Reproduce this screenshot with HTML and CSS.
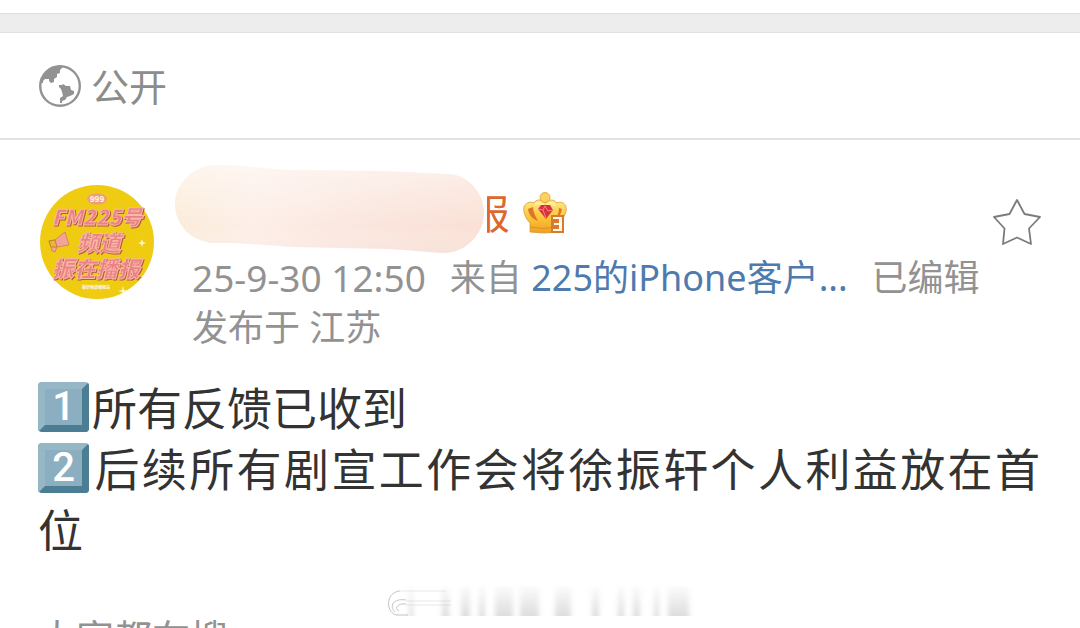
FILE: index.html
```html
<!DOCTYPE html>
<html lang="zh-CN">
<head>
<meta charset="utf-8">
<meta name="viewport" content="width=device-width, initial-scale=1">
<title>公开</title>
<link rel="stylesheet" href="styles.css">
</head>
<body>
<main class="page">
  <div class="divider"></div>
  <header class="visibility">
    <svg class="globe" viewBox="0 0 42 42" aria-hidden="true">
      <circle cx="21" cy="21" r="19.8" fill="none" stroke="#929292" stroke-width="2.4"/>
      <path fill="#929292" d="M2 15 8 6 17 1H23V3L21 5V8L18 9V12L15 14V17L12 18L10 16V14H6L4 16V18H1ZM20 20H23L24 19L27 21H31L32 25L35 26V29L31 31L28 32L26 35L23 36V38H21V33L24 31L23 27L22 24L20 22Z"/>
    </svg>
    <span>公开</span>
  </header>

  <article class="post">
    <div class="post-head">
      <svg class="avatar" viewBox="0 0 114 114" role="img" aria-label="头像">
        <circle cx="57" cy="57" r="57" fill="#efcb12"/>
        <ellipse cx="57" cy="14" rx="10" ry="5.5" fill="#ee9b86"/>
        <text class="tiny" x="57" y="17" font-size="8">999</text>
        <g class="face">
          <text x="57" y="40" font-size="21">FM225号</text>
          <text x="59" y="66" font-size="22">频道</text>
          <text x="56" y="92" font-size="22">振在播报</text>
        </g>
        <path d="M9 56 15 55 25 47 29 60 17 62 15 67 12 66 11 62Z" fill="#f3a49a" stroke="#d98558"/>
        <path d="M9 56 15 55 17 62 11 62Z" fill="#e9b932" stroke="#bd8330"/>
        <text class="tiny" x="56" y="104" font-size="4">振轩频道播报站</text>
        <path d="m102 54 1 3 3 1-3 1-1 3-1-3-3-1 3-1ZM83 101l1 4 4 1-4 1-1 4-1-4-4-1 4-1Z" fill="#fff7c8"/>
      </svg>

      <div class="author">
        <div class="name-row">
          <span class="name">报</span>
          <svg class="crown" viewBox="0 0 44 44" role="img" aria-label="会员">
            <defs>
              <linearGradient id="gold" x1="0" y1="0" x2="0" y2="1">
                <stop offset="0" stop-color="#ffe985"/><stop offset=".55" stop-color="#fbc438"/><stop offset="1" stop-color="#ee9f22"/>
              </linearGradient>
            </defs>
            <path d="M7 40V31C2 26 0 19 1 15c1-4 6-6 10-4 2-4 7-4 11 0 4-4 9-4 12 0 4-2 8 0 9 4 1 5-2 11-7 16v9Q21 42 7 40Z" fill="url(#gold)" stroke="#d9993a" stroke-width=".8"/>
            <path d="M5 17c1 7 5 10 10 12-3-5-5-10-5-14ZM39 17c-1 5-3 8-6 10 2-4 3-8 3-11Z" fill="#df7426"/>
            <path d="M12 13c2-3 7-2 9 1M24 13c3-3 7-2 8 1" fill="none" stroke="#fff0a4" stroke-width="2"/>
            <path d="M7 35Q20 38 34 35" fill="none" stroke="#d9902c"/>
            <circle cx="22" cy="5.5" r="5" fill="#fbd35a" stroke="#d99a38" stroke-width=".8"/>
            <path d="m15 17 3-4h9l3 5-7 9Z" fill="#d8323c"/>
            <path d="m15 17 5 1 2-4 3 5 5-1M20 18l3 8" fill="none" stroke="#f48580"/>
            <path d="M28 23H41V41H28Z" fill="#d9792f"/>
            <path d="M30 25H39V39H30V37H36V33H31V31H36V27H30Z" fill="#fff8e8"/>
          </svg>
          <svg class="smear" viewBox="0 0 310 88" aria-hidden="true">
            <defs>
              <linearGradient id="skin"><stop offset="0" stop-color="#fbecd9"/><stop offset=".25" stop-color="#fdeee7"/><stop offset=".65" stop-color="#fae5dc"/><stop offset="1" stop-color="#fae0d5"/></linearGradient>
              <linearGradient id="sheen" x1="0" y1="0" x2="0" y2="1"><stop offset="0" stop-color="#fff" stop-opacity=".5"/><stop offset=".7" stop-color="#fff" stop-opacity="0"/><stop offset="1" stop-color="#efe2df" stop-opacity=".3"/></linearGradient>
            </defs>
            <path d="M40 0C60-1 85 4 115 5L205 6 270 9C292 8 309 27 309 48 309 70 290 88 268 88L215 84 120 82 60 78 38 78C14 76 0 58 0 39 0 19 18 1 40 0Z" fill="url(#skin)"/>
            <path d="M40 0C60-1 85 4 115 5L205 6 270 9C292 8 309 27 309 48 309 70 290 88 268 88L215 84 120 82 60 78 38 78C14 76 0 58 0 39 0 19 18 1 40 0Z" fill="url(#sheen)"/>
          </svg>
        </div>
        <div class="meta">
          <time datetime="2025-09-30T12:50">25-9-30 12:50</time>
          <span>来自 <a href="#">225的iPhone客户...</a></span>
          <span>已编辑</span>
        </div>
        <div class="meta">发布于 江苏</div>
      </div>

      <button class="star" type="button" aria-label="收藏">
        <svg viewBox="0 0 50 50" aria-hidden="true">
          <path d="M25 3 32.5 17 48 20 37 31.5 39 47 25 40.5 11 47 12.5 31.5 2 20 17.5 17Z" fill="none" stroke="#7b7b7b" stroke-width="1.8" stroke-linejoin="round"/>
        </svg>
      </button>
    </div>

    <div class="content">
      <p><span class="keycap">1</span>所有反馈已收到</p>
      <p class="filled"><span class="keycap">2</span>后续所有剧宣工作会将徐振轩个人利益放在首</p>
      <p>位</p>
    </div>
  </article>

  <footer class="bottom">
    <h2 class="trending">大家都在搜</h2>
    <svg class="watermark" viewBox="0 0 310 40" aria-hidden="true">
      <defs>
        <linearGradient id="fade" x1="0" y1="0" x2="0" y2="1"><stop offset="0" stop-color="#aaa" stop-opacity="0"/><stop offset="1" stop-color="#aaa" stop-opacity=".4"/></linearGradient>
        <filter id="soft"><feGaussianBlur stdDeviation="2.5 0.3"/></filter>
      </defs>
      <path d="M14 8C0 9-1 28 10 32H22M20 17C7 15 3 23 9 29M20 21C11 20 8 26 13 28" fill="none" stroke="#c4c4c4"/>
      <path d="M14 8H60M20 18H65M20 22H65" stroke="#f4f4f4" stroke-width="2"/>
      <path d="M23 0H27V33H23ZM56 3H63V33H56ZM75 3H84V33H75ZM93 3H99V33H93ZM109 3H127V33H109ZM134 3H153V33H134ZM169 3H185V33H169ZM206 3H213V33H206ZM232 3H238V33H232ZM247 3H254V33H247ZM268 3H273V33H268ZM282 3H303V33H282Z" fill="url(#fade)" filter="url(#soft)"/>
    </svg>
  </footer>
</main>
</body>
</html>
```
FILE: styles.css
```css
* {
  box-sizing: border-box;
}

body {
  margin: 0;
  background: #fff;
  color: #333;
  font-family: "Noto Sans", "Noto Sans CJK SC", sans-serif;
}

p,
h2 {
  margin: 0;
}

.page {
  height: 100vh;
  overflow: hidden;
  padding-top: 13px;
}

.divider {
  height: 20px;
  background: #ededed;
  border-top: 1px solid #dedede;
  border-bottom: 1px solid #e2e2e2;
}

.visibility {
  display: flex;
  align-items: center;
  gap: 10px;
  height: 107px;
  padding: 0 39px;
  border-bottom: 2px solid #e2e2e2;
  color: #8c8c8c;
  font-size: 38px;
  line-height: 56px;
}

.globe {
  width: 42px;
  height: 42px;
}

.post {
  padding: 45px 40px 0 38px;
}

.post-head {
  display: flex;
}

.avatar {
  flex: none;
  width: 114px;
  height: 114px;
  margin-left: 2px;
}

.avatar text {
  font-family: "Noto Sans CJK SC", sans-serif;
  font-weight: 900;
  text-anchor: middle;
}

.face {
  filter: drop-shadow(1px 1px 0 #b65a42);
}

.face text {
  font-style: italic;
  fill: #ee7f88;
  stroke: #f5b9a4;
  stroke-width: 1px;
}

.avatar .tiny {
  fill: #fff3d6;
}

.author {
  flex: 1;
  min-width: 0;
  margin-left: 38px;
}

.name-row {
  position: relative;
  display: flex;
  align-items: center;
  gap: 13px;
  height: 68px;
  padding: 0 0 10px 278px;
}

.name {
  color: #dc682d;
  font-size: 40px;
  line-height: 58px;
  clip-path: inset(0 0 0 17px);
}

.crown {
  width: 44px;
  height: 44px;
}

.smear {
  position: absolute;
  left: -17px;
  top: -20px;
  width: 310px;
  height: 88px;
}

.meta {
  display: flex;
  gap: 24px;
  color: #929292;
  font-size: 36px;
  line-height: 50px;
  white-space: nowrap;
}

.meta time {
  font-size: 37px;
}

.meta a {
  color: #4e7aad;
  text-decoration: none;
}

.star {
  flex: none;
  width: 50px;
  height: 50px;
  margin: 12px -2px 0 -48px;
  padding: 0;
  border: 0;
  background: none;
}

.star svg {
  display: block;
}

.content {
  margin-top: 25px;
  font-size: 45px;
  line-height: 61px;
}

.filled {
  text-align-last: justify;
}

.keycap {
  display: inline-block;
  width: 51px;
  height: 50px;
  margin-right: 3px;
  border: 7px solid;
  border-color: #96b8c6 #4b7e93 #4b7e93 #96b8c6;
  border-radius: 4px;
  background: #8bafc0;
  color: #fff;
  font-family: Roboto, sans-serif;
  font-size: 40px;
  font-weight: 500;
  line-height: 36px;
  text-align: center;
  text-align-last: center;
  vertical-align: 6px;
}

.bottom {
  display: flex;
  align-items: flex-start;
  gap: 158px;
  padding: 22px 38px 0;
}

.trending {
  margin-top: 26px;
  color: #929292;
  font-size: 38px;
  font-weight: 400;
  line-height: 56px;
}

.watermark {
  width: 310px;
  height: 40px;
}
```
